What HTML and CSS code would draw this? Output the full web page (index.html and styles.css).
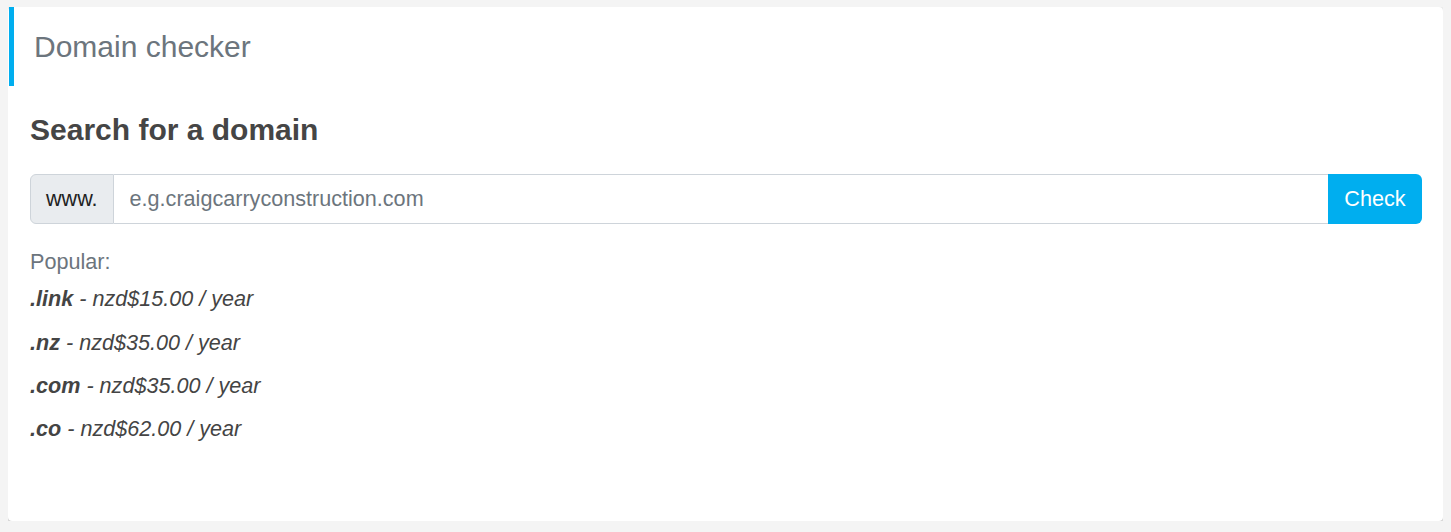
FILE: index.html
```html
<!DOCTYPE html>
<html>
<head>
<meta charset="utf-8">
<link rel="stylesheet" href="styles.css">
</head>
<body>
<div class="card">
  <div class="card-header">Domain checker</div>
  <div class="card-body">
    <h3 class="title">Search for a domain</h3>
    <div class="input-group">
      <span class="addon">www.</span>
      <input class="field" type="text" placeholder="e.g.craigcarryconstruction.com">
      <button class="btn">Check</button>
    </div>
    <p class="popular">Popular:</p>
    <p class="tld"><b>.link</b> - nzd$15.00 / year</p>
    <p class="tld"><b>.nz</b> - nzd$35.00 / year</p>
    <p class="tld"><b>.com</b> - nzd$35.00 / year</p>
    <p class="tld"><b>.co</b> - nzd$62.00 / year</p>
  </div>
</div>
</body>
</html>
```
FILE: styles.css
```css
html, body {
  background: #f4f4f4;
}
body {
  margin: 7px 8px;
  font-family: "Liberation Sans", Arial, sans-serif;
  font-size: 21.6px;
  line-height: 1.5;
  color: #444;
}
.card {
  background: #fff;
  border-radius: 4px;
  box-shadow: 0 1px 3px rgba(0, 0, 0, 0.3);
  height: 514px;
  box-sizing: border-box;
}
.card-header {
  border-left: 5px solid #00aeef;
  margin-left: 1px;
  padding: 22px 20px 21px;
  font-size: 30px;
  line-height: 36px;
  color: #6c757d;
}
.card-body {
  padding: 26px 21px 40px 22px;
}
.title {
  margin: 0 0 26px;
  font-size: 30px;
  line-height: 36px;
  font-weight: bold;
  color: #454545;
}
.input-group {
  display: flex;
  height: 50px;
}
.addon {
  display: flex;
  align-items: center;
  padding: 0 15px;
  background: #e9ecef;
  border: 1px solid #ced4da;
  border-radius: 6px 0 0 6px;
  color: #222;
  font-size: 21.6px;
}
.field {
  flex: 1;
  min-width: 0;
  border: 1px solid #ced4da;
  border-left: none;
  border-right: none;
  padding: 0 16px;
  font-family: inherit;
  font-size: 21.6px;
  color: #495057;
  outline: none;
}
.field::placeholder {
  color: #6c757d;
}
.btn {
  border: none;
  background: #00aeef;
  color: #fff;
  font-family: inherit;
  font-size: 21.6px;
  padding: 0 16.5px;
  border-radius: 0 6px 6px 0;
}
.popular {
  margin: 22px 0 5px;
  color: #6c757d;
}
.tld {
  margin: 0 0 10.8px;
  font-style: italic;
  color: #444;
}
.tld b {
  font-weight: bold;
}
```
